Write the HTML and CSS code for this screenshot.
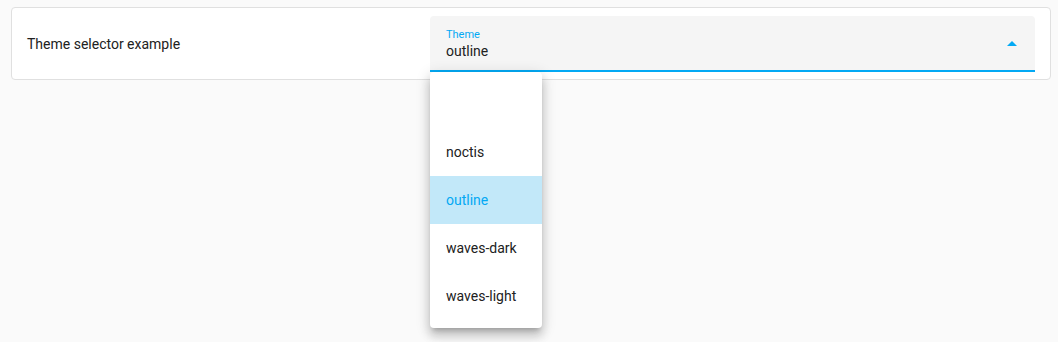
FILE: index.html
```html
<!DOCTYPE html>
<html lang="en">
<head>
  <meta charset="UTF-8" />
  <title>Theme selector</title>
  <link rel="stylesheet" href="styles.css">
</head>
<body>
  <div class="card">
    <div class="card-label">Theme selector example</div>
    <div class="select">
      <div class="select-field">
        <div class="select-text">
          <span class="select-label">Theme</span>
          <span class="select-value">outline</span>
        </div>
        <svg class="select-arrow" width="10" height="5" viewBox="0 0 10 5"><polygon points="0,5 5,0 10,5" fill="#03a9f4"/></svg>
      </div>
      <ul class="menu">
        <li class="menu-item"></li>
        <li class="menu-item">noctis</li>
        <li class="menu-item selected">outline</li>
        <li class="menu-item">waves-dark</li>
        <li class="menu-item">waves-light</li>
      </ul>
    </div>
  </div>
</body>
</html>
```
FILE: styles.css
```css
html {
  height: 100%;
}
body {
  box-sizing: border-box;
  min-height: 100%;
  margin: 0;
  padding: 7px 7px 0 11px;
  background: #fafafa;
  font-family: Roboto, "Liberation Sans", sans-serif;
  color: #212121;
}
.card {
  display: flex;
  align-items: center;
  height: 71px;
  background: #fff;
  border: 1px solid #e0e0e0;
  border-radius: 4px;
  padding: 0 15px;
}
.card-label {
  font-size: 14px;
  width: 403px;
  margin-top: 1px;
}
.select {
  flex: 1;
  position: relative;
  height: 56px;
  margin-top: 1px;
  z-index: 2;
}
.select-field {
  display: flex;
  align-items: center;
  height: 54px;
  background: #f5f5f5;
  border-radius: 4px 4px 0 0;
  border-bottom: 2px solid #03a9f4;
  padding: 0 16px;
}
.select-text {
  flex: 1;
  display: flex;
  flex-direction: column;
  padding-top: 2px;
}
.select-label {
  font-size: 11px;
  color: #03a9f4;
  line-height: 14px;
}
.select-value {
  font-size: 14px;
  line-height: 18px;
}
.select-arrow {
  margin-right: 2px;
}
.menu {
  position: absolute;
  top: 56px;
  left: 0;
  width: 112px;
  margin: 0;
  padding: 8px 0;
  list-style: none;
  background: #fff;
  border-radius: 4px;
  box-shadow: 0 5px 5px -3px rgba(0,0,0,0.2), 0 8px 10px 1px rgba(0,0,0,0.14), 0 3px 14px 2px rgba(0,0,0,0.12);
}
.menu-item {
  height: 48px;
  line-height: 48px;
  padding: 0 16px;
  font-size: 14px;
}
.menu-item.selected {
  background: #c2e8f9;
  color: #03a9f4;
}
```
